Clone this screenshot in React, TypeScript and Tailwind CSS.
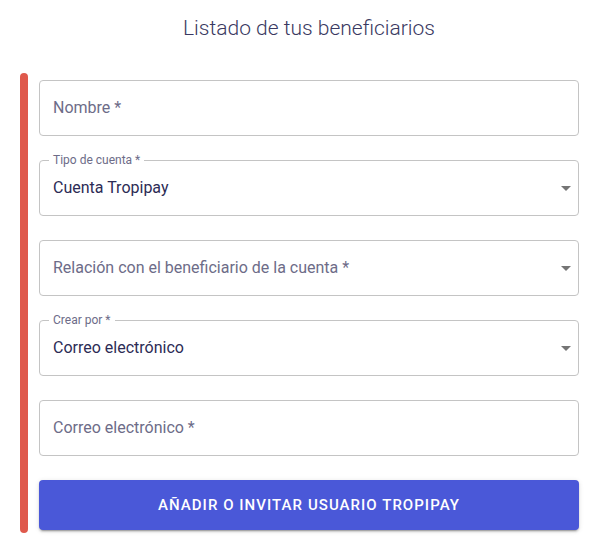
import React from 'react';

const Arrow = () => (
  <svg width="24" height="24" viewBox="0 0 24 24" className="shrink-0 fill-[#757575]">
    <path d="M7 10l5 5 5-5z" />
  </svg>
);

interface FieldProps {
  label: string;
  value?: string;
  select?: boolean;
}

const Field: React.FC<FieldProps> = ({ label, value, select }) => (
  <div className="relative h-[56px] w-full rounded-[4px] border border-[#c4c4c4] flex items-center pl-[13px]">
    {value && (
      <span className="absolute -top-[9px] left-[9px] px-[4px] bg-white text-[12px] leading-[16px] text-[#6d6c88]">
        {label}
      </span>
    )}
    <span className={`flex-1 text-[16px] ${value ? 'text-[#2c2b55]' : 'text-[#6d6c88]'}`}>
      {value ?? label}
    </span>
    {select && <Arrow />}
  </div>
);

export default function App() {
  return (
    <div className="w-[596px] h-[553px] bg-white" style={{ fontFamily: 'Roboto, "Liberation Sans", sans-serif' }}>
      <div className="h-[73px] pl-[39px] pr-[17px] pt-[13px]">
        <h1 className="text-center text-[21px] leading-[30px] font-light text-[#3a3961]">
          Listado de tus beneficiarios
        </h1>
      </div>
      <div className="flex">
        <div className="ml-[20px] w-[8px] h-[460px] rounded-full bg-[#df594c]" />
        <div className="ml-[11px] w-[540px] pt-[7px] flex flex-col gap-[24px]">
          <Field label="Nombre *" />
          <Field label="Tipo de cuenta *" value="Cuenta Tropipay" select />
          <Field label="Relación con el beneficiario de la cuenta *" select />
          <Field label="Crear por *" value="Correo electrónico" select />
          <Field label="Correo electrónico *" />
          <button className="h-[50px] w-full rounded-[4px] bg-[#4a58d8] text-white text-[15px] font-medium tracking-[1.05px] uppercase shadow-[0_3px_1px_-2px_rgba(0,0,0,0.2),0_2px_2px_0_rgba(0,0,0,0.14),0_1px_5px_0_rgba(0,0,0,0.12)]">
            Añadir o invitar usuario Tropipay
          </button>
        </div>
      </div>
    </div>
  );
}
